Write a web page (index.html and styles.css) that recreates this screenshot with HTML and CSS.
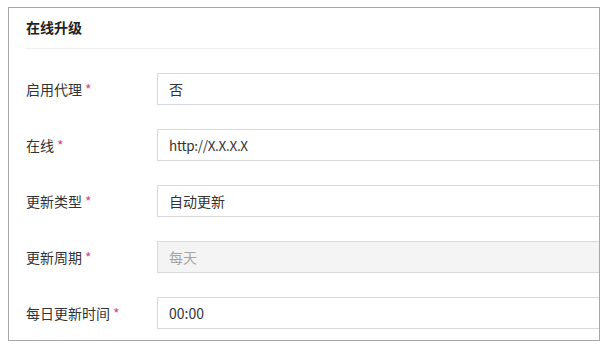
FILE: index.html
```html
<!DOCTYPE html>
<html lang="zh-CN">
<head>
  <meta charset="UTF-8" />
  <title>在线升级</title>
  <link rel="stylesheet" href="styles.css">
</head>
<body>
  <div class="panel">
    <div class="panel-head">
      <h3>在线升级</h3>
    </div>
    <form class="form">
      <div class="row">
        <label>启用代理<span class="req">*</span></label>
        <div class="field">否</div>
      </div>
      <div class="row">
        <label>在线<span class="req">*</span></label>
        <div class="field latin">http://X.X.X.X</div>
      </div>
      <div class="row">
        <label>更新类型<span class="req">*</span></label>
        <div class="field">自动更新</div>
      </div>
      <div class="row">
        <label>更新周期<span class="req">*</span></label>
        <div class="field disabled">每天</div>
      </div>
      <div class="row">
        <label>每日更新时间<span class="req">*</span></label>
        <div class="field">00:00</div>
      </div>
    </form>
  </div>
</body>
</html>
```

FILE: styles.css
```css
* {
  box-sizing: border-box;
}
body {
  margin: 0;
  padding: 7px 0 0 8px;
  background: #fff;
  font-family: "Noto Sans CJK SC", "Microsoft YaHei", sans-serif;
  font-size: 14px;
  color: #333;
}
.panel {
  width: 592px;
  height: 334px;
  border: 1px solid #a8a8a8;
  overflow: hidden;
  background: #fff;
}
.panel-head {
  margin-left: 16px;
  height: 41px;
  border-bottom: 1px solid #f0f0f0;
  display: flex;
  align-items: center;
}
.panel-head h3 {
  margin: 0 0 3px 1px;
  font-size: 14px;
  font-weight: bold;
  color: #222;
}
.form {
  padding: 24px 0 0 17px;
  display: flex;
  flex-direction: column;
  gap: 24px;
}
.row {
  display: flex;
  align-items: center;
}
.row label {
  width: 131px;
  flex-shrink: 0;
  color: #333;
}
.req {
  color: #d0468c;
  margin-left: 3px;
}
.field {
  flex-shrink: 0;
  width: 480px;
  height: 32px;
  border: 1px solid #d9d9d9;
  padding: 0 11px;
  display: flex;
  align-items: center;
  color: #333;
  background: #fff;
}
.field.latin {
  font-size: 13.5px;
  letter-spacing: -0.3px;
}
.field.disabled {
  background: #f4f4f4;
  color: #a5a5a5;
}
```
